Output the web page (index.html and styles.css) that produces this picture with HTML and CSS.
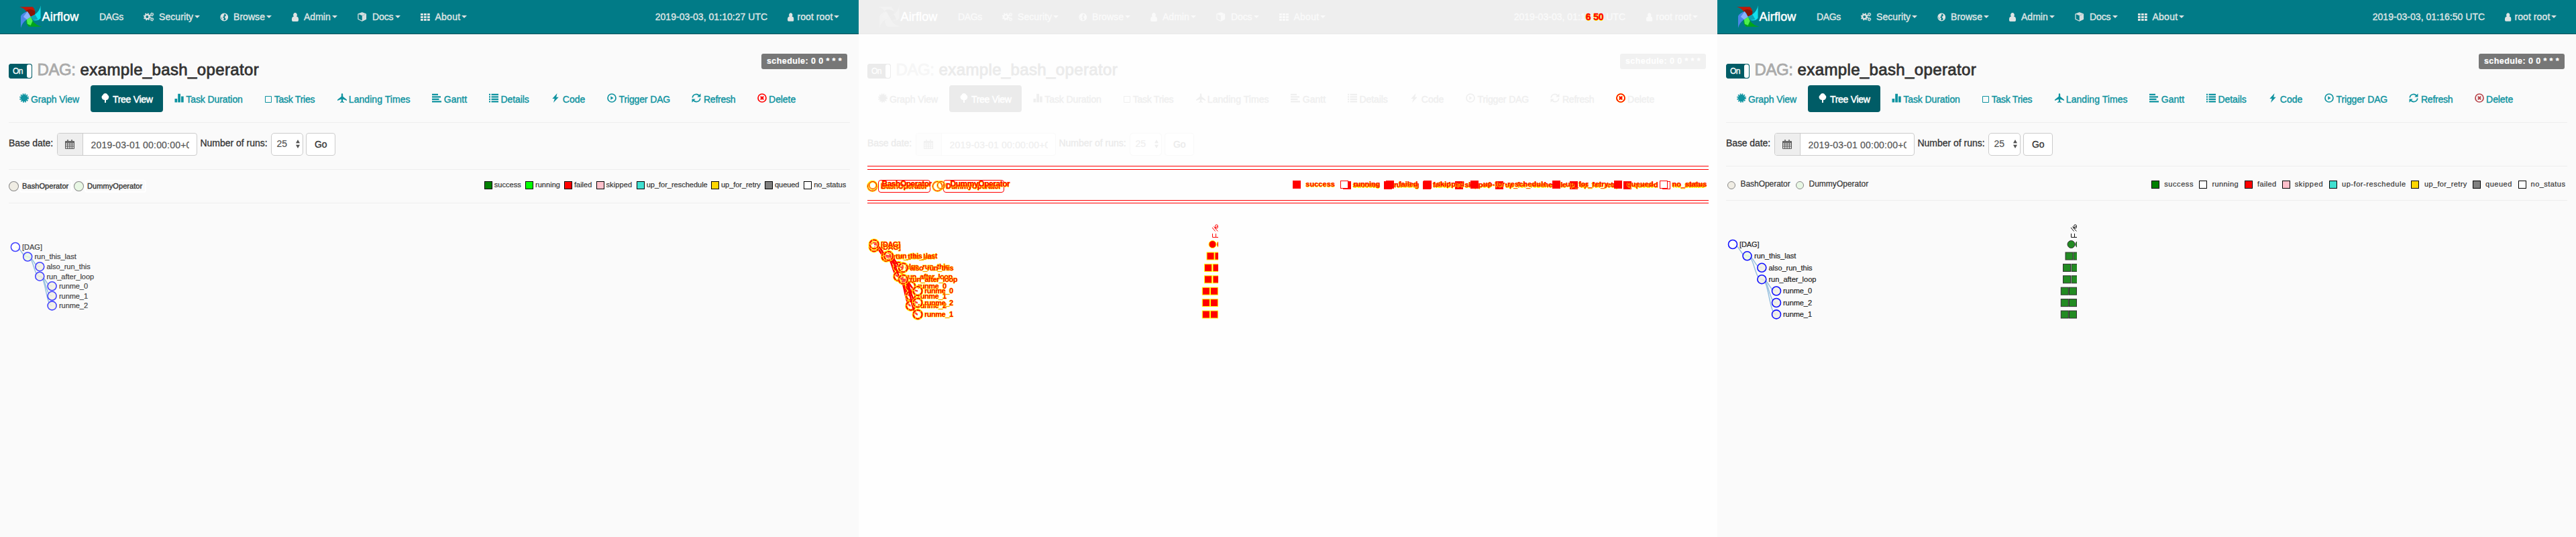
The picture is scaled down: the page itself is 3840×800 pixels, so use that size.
FILE: index.html
```html
<!DOCTYPE html>
<html lang="en">
<head>
<meta charset="utf-8">
<title>Airflow - example_bash_operator</title>
<link rel="stylesheet" href="styles.css">
</head>
<body>
<svg class="symbols" aria-hidden="true">
  <symbol id="cogs" viewBox="0 0 16 14"><g fill="none" stroke="currentColor"><circle cx="5.5" cy="7" r="3.3" stroke-width="2.4"/><circle cx="5.5" cy="7" r="5" stroke-width="1.6" stroke-dasharray="2 1.93"/><circle cx="13" cy="3.3" r="1.7" stroke-width="1.3"/><circle cx="13" cy="3.3" r="2.6" stroke-width="1" stroke-dasharray="1.2 1.52"/><circle cx="13" cy="10.8" r="1.7" stroke-width="1.3"/><circle cx="13" cy="10.8" r="2.6" stroke-width="1" stroke-dasharray="1.2 1.52"/></g></symbol>
  <symbol id="globe" viewBox="0 0 13 13"><circle cx="6.5" cy="6.5" r="5.5" fill="none" stroke="currentColor" stroke-width="1.3"/><path fill="currentColor" d="M1 5 3 2l3-1 1 2-1.500 1L6 5.500 4 6.500l2 1.500-.5 3L4 12 3 8.500zM8 1.500l3 2 1 3-1.500 3.500L9 11l-.5-3L7 7l1-2 1.500-.5z"/></symbol>
  <symbol id="user" viewBox="0 0 10 13"><path fill="currentColor" d="M5 0a2.800 3.200 0 0 1 2 5.500c2 .4 3 1.800 3 4V11q0 2-1.600 2H1.600Q0 13 0 11V9.500c0-2.200 1-3.600 3-4A2.800 3.200 0 0 1 5 0z"/></symbol>
  <symbol id="cube" viewBox="0 0 13 14"><path fill="none" stroke="currentColor" stroke-width="1.200" stroke-linejoin="round" d="M6.500.8 12.300 3v7.500L6.500 13.300.7 10.500V3z"/><path fill="currentColor" d="M6.500 5.500 12 3.300V10.500l-5.500 2.700zM6.500 1 1 3l5.500 2.200L12 3z" fill-opacity=".95"/></symbol>
  <symbol id="th" viewBox="0 0 14 11"><path fill="currentColor" d="M0 0h3.800v3H0zM5 0h3.800v3H5zM10 0h3.800v3H10zM0 4h3.800v3H0zM5 4h3.800v3H5zM10 4h3.800v3H10zM0 8h3.800v3H0zM5 8h3.800v3H5zM10 8h3.800v3H10z"/></symbol>
  <symbol id="burst" viewBox="0 0 14 14"><circle cx="7" cy="7" r="5.200" fill="currentColor"/><circle cx="7" cy="7" r="6" fill="none" stroke="currentColor" stroke-width="1.800" stroke-dasharray="1.700 1.442"/></symbol>
  <symbol id="tree" viewBox="0 0 12 14"><path fill="currentColor" d="M6 0c2 .2 3 1.200 3.500 2.500 2 1 2.300 3.500 1.300 5C10 9.500 8.500 10 7 10v4H5v-4C3 10 1.500 9 1 7.500 0 5.500.6 3.500 2.500 2.500 3 1 4 .2 6 0z"/></symbol>
  <symbol id="stats" viewBox="0 0 14 14"><path fill="currentColor" d="M.5 8h3.700v5.500H.5zM5.200.8H9v12.700H5.200zM10 4.500h3.700v9H10z"/></symbol>
  <symbol id="blank" viewBox="0 0 10 14"><path fill="none" stroke="currentColor" d="M.5 4.500h9v9h-9z"/></symbol>
  <symbol id="plane" viewBox="0 0 14 14"><path fill="currentColor" d="M7 0c.8 0 1.200 1 1.200 2v2.800L14 9.500V11L8.300 8.800 8 11.800l2 1.400v.8l-3-.6-3 .6v-.8l2-1.400-.3-3L0 11V9.500l5.800-4.700V2C5.800 1 6.200 0 7 0z"/></symbol>
  <symbol id="align" viewBox="0 0 14 14"><path fill="currentColor" d="M0 .8h9v2.200H0zM0 4.200h13v2.200H0zM0 7.800h10.500V10H0zM0 11.300h14v2.200H0z"/></symbol>
  <symbol id="list" viewBox="0 0 14 14"><path fill="currentColor" d="M0 .8h2v2.200H0zM0 4.200h2v2.200H0zM0 7.800h2V10H0zM0 11.300h2v2.200H0zM3.500.8H14v2.200H3.500zM3.500 4.200H14v2.200H3.500zM3.500 7.800H14V10H3.500zM3.500 11.300H14v2.200H3.500z"/></symbol>
  <symbol id="flash" viewBox="0 0 10 14"><path fill="currentColor" d="M7.500 0 .3 8h3.500L2 14l7.700-8.300H6.200z"/></symbol>
  <symbol id="play" viewBox="0 0 14 14"><circle cx="7" cy="7" r="6" fill="none" stroke="currentColor" stroke-width="1.700"/><path fill="currentColor" d="m5.300 4.300 4.200 2.700-4.200 2.700z"/></symbol>
  <symbol id="refresh" viewBox="0 0 14 14"><g fill="none" stroke="currentColor" stroke-width="1.700"><path d="M1.300 6.500A5.500 5.500 0 0 1 11 3.400M12.700 7.500A5.500 5.500 0 0 1 3 10.600"/></g><path fill="currentColor" d="M13.500.3v5.200H8.300zM.5 13.700V8.500h5.200z"/></symbol>
  <symbol id="remove" viewBox="0 0 14 14"><circle cx="7" cy="7" r="6" fill="none" stroke="currentColor" stroke-width="1.700"/><path fill="none" stroke="currentColor" stroke-width="2" d="m4.800 4.800 4.400 4.400M9.200 4.800 4.800 9.200"/></symbol>
  <symbol id="calendar" viewBox="0 0 14 14"><path fill="none" stroke="currentColor" d="M.5 2.500h13v11H.5zM.5 5h13M.5 8h13M.5 10.700h13M3.700 5v8.500M7 5v8.500M10.300 5v8.500"/><path fill="currentColor" d="M3 0h2v4H3zM9 0h2v4H9zM1 2.500h12V5H1z" fill-opacity=".75"/></symbol>
  <symbol id="sort" viewBox="0 0 6 13"><path fill="currentColor" d="M3 0l3 5.300H0zM3 13 0 7.700h6z"/></symbol>
</svg>
<main class="compare" id="compare"></main>
<script src="script.js"></script>
</body>
</html>
```
FILE: styles.css
```css
* { box-sizing: border-box; }
body { margin: 0; background: #fafafa; font: 14px/20px "Liberation Sans", Arial, sans-serif; color: #333; }
.symbols { position: absolute; width: 0; height: 0; }
.compare { display: grid; grid-template-columns: repeat(3, 1280px); height: 800px; overflow: hidden; }

.panel {
  --bg: #fafafa; --nav: #017b87; --nav-line: #00515a; --nav-text: #dfe3e3; --brand: #fff;
  --muted: #aaa; --text: #333; --deep: #005c66; --link: #0f93a0; --badge: #777;
  --line: #eee; --field: #ccc; --addon: #eee; --input: #555; --danger: #f00;
  height: 800px; overflow: hidden; background: var(--bg); color: var(--text);
}
.panel.after { --danger: #b8444a; }
.panel.diff {
  --bg: #fefefe; --nav: #eee; --nav-line: #e8e8e8; --nav-text: #fafafa; --brand: #fff;
  --muted: #f6f6f6; --text: #ebebeb; --deep: #ebebeb; --link: #efefef; --badge: #f1f1f1;
  --line: #fefefe; --field: #f9f9f9; --addon: #fdfdfd; --input: #efefef;
}
.fit { display: inline-block; white-space: pre; }
.icon { display: block; flex: none; }

.navbar {
  display: grid; grid-template-columns: 119px 66px 114px 107px 98px 94px 349.700px 197.800px 1fr;
  height: 51px; padding-left: 29px; align-items: center;
  background: var(--nav); border-bottom: 1px solid var(--nav-line); color: var(--nav-text);
}
.brand { display: flex; align-items: center; color: var(--brand); font-size: 18px; -webkit-text-stroke: .5px; }
.logo { display: block; width: 33.500px; height: 34px; }
.diff .logo path { fill: #f2f2f2; }
.diff .logo .shade { fill: #e8e8e8; }
.nav-item { display: flex; align-items: center; -webkit-text-stroke: .4px; }
.nav-icon { flex: none; }
.caret { margin-left: 2px; border: 4px solid transparent; border-top: 4px solid; border-bottom: 0; }

.dag-head { display: grid; grid-template-columns: 42.500px 64.100px 1fr 145px; height: 76px; padding: 0 0 0 13px; }
.toggle { display: flex; width: 35px; height: 22px; margin-top: 44px; border: 1px solid var(--deep); border-radius: 3px; background: var(--deep); color: #fff; font-size: 12px; padding-left: 5px; }
.toggle .fit { flex: 1; -webkit-text-stroke: .3px; }
.knob { width: 7px; background: #fff; border-radius: 3px; }
.title { margin-top: 38px; font-size: 24px; line-height: 30px; -webkit-text-stroke: .8px; }
.title.muted { color: var(--muted); }
.badge { width: 128px; height: 23px; margin-top: 29px; padding-left: 8px; border-radius: 3px; background: var(--badge); color: #fff; font: bold 12.500px/23px "Liberation Sans", Arial, sans-serif; -webkit-text-stroke: .2px; }

.tabs { display: grid; grid-template-columns: 122px 109.500px 134.500px 108.500px 140.500px 85px 94px 82px 126.500px 97.500px 100px; height: 55px; margin-left: 13px; color: var(--link); }
.tab { display: flex; height: 40px; padding: 12px 0 0 15.500px; border-radius: 4px; -webkit-text-stroke: .4px; }
.tab.active { width: 108px; background: var(--deep); color: #fff; -webkit-text-stroke: .5px; }
.tab .fit { line-height: 18px; }
.tab .icon.danger { color: var(--danger); }
.diff .tab .icon.danger { filter: drop-shadow(0 0 .5px #ff0) drop-shadow(0 0 .5px #ff0); }

.form { display: grid; grid-template-columns: 71.500px 209px 5px 105px 48px 4.600px 44px; height: 65px; margin: 0 13px; padding-top: 15px; border-top: 1px solid var(--line); align-items: start; }
.form label { line-height: 30px; -webkit-text-stroke: .3px; }
.form .runs-label { grid-column: 4; }
.date { display: flex; height: 34px; border: 1px solid var(--field); border-radius: 4px; background: #fff; overflow: hidden; color: var(--input); }
.addon { display: grid; place-items: center; width: 38px; border-right: 1px solid var(--field); background: var(--addon); }
.date-value { width: 146.500px; margin-left: 12px; overflow: hidden; line-height: 34px; white-space: pre; -webkit-text-stroke: .2px; }
.count { grid-column: 5; display: flex; align-items: center; justify-content: space-between; height: 34px; padding: 0 4px 2px 8px; border: 1px solid var(--field); border-radius: 5px; background: #fff; color: var(--input); -webkit-text-stroke: .2px; }
.go { grid-column: 7; height: 34px; padding-left: 12px; line-height: 33px; border: 1px solid var(--field); border-radius: 4px; background: #fff; -webkit-text-stroke: .3px; }

.legends { display: grid; height: 56px; margin: 0 13px; }
.legend { grid-area: 1 / 1; display: flex; justify-content: space-between; width: 1254px; border: solid var(--line); border-width: 1px 0; font-size: 11px; -webkit-text-stroke: .2px; }
.legend.before { height: 51px; margin-top: 5px; }
.legend.after { height: 52px; }
.ops, .states { display: flex; align-items: flex-start; }
.ops { font-size: 12px; }
.before .ops { font-size: 11px; padding-top: 15px; }
.after .ops { padding: 18px 0 0 1.500px; }
.before .states { padding-top: 17px; }
.after .states { padding-top: 21px; }
.op, .state { display: flex; flex: none; align-items: flex-start; }
.dot { border: 1px solid #888; border-radius: 50%; }
.before .dot { width: 14.600px; height: 15px; margin-top: 2px; }
.after .dot { width: 12px; height: 12px; margin-top: 4px; }
.before .chip { height: 19px; margin-left: 1px; padding: 0 4px 0 2.500px; border: 2px solid #fff; border-radius: 4px; line-height: 15px; -webkit-text-stroke: .35px; }
.after .chip { margin-left: 8px; line-height: 17px; }
.swatch { width: 12px; height: 12px; border: 1px solid #000; }
.state .fit { margin-top: -1px; line-height: 12px; }

.diff .legend { --line: #f00; }
.diff .legend .fit, .hot { color: #f00; font-weight: bold; text-shadow: .5px .5px #ff0, -.5px 0 #ff0; }
.diff .before .chip { border: 1px solid #f00; padding-left: 3.500px; line-height: 17px; }
.diff .dot { border-color: #f00; box-shadow: 0 0 0 1px #ff0, inset 0 0 0 1px #ff0; }
.diff .swatch { border-color: #f00; }

.graph { display: block; width: 1280px; height: 497px; font-size: 11px; }
.link { fill: none; stroke: #97c0df; stroke-width: 1.500; }
.node { stroke: #44f; stroke-width: 1.600; fill-opacity: .85; }
.after .node { stroke: #11f; }
.label { fill: #444; stroke: #444; stroke-width: .2; }
.after .label { fill: #222; stroke: #222; }
.run { fill: #228b22; stroke: #333; stroke-width: 1; }
.tick { fill: none; stroke: #111; stroke-width: 1; }
.diff .link { stroke: #f00; stroke-width: 2.500; }
.diff .node { stroke: #f00; stroke-width: 2; stroke-dasharray: 6 1; fill: #fefefe; fill-opacity: .25; }
.diff .halo { fill: none; stroke: #ff0; stroke-width: 4; }
.diff .label { fill: #f00; stroke: #ff0; stroke-width: 1; paint-order: stroke; font-weight: bold; }
.diff .run { fill: #f00; stroke: #ff0; }
.diff .tick { stroke: #f00; }
```
FILE: script.js
```js
const icon = (name, w, h, cls = '') => `<svg class="icon ${cls}" width="${w}" height="${h}"><use href="#${name}"/></svg>`;
const fit = (text, w, cls = '') => `<span class="fit ${cls}" data-w="${w}">${text}</span>`;

const NAV = [
  ['', 0, 0, 0, 'DAGs', 36, 0],
  ['cogs', 15.5, 14, 23, 'Security', 51.2, 1],
  ['globe', 12.5, 13, 20, 'Browse', 47, 1],
  ['user', 10, 13, 18, 'Admin', 39.8, 1],
  ['cube', 13.5, 14, 22, 'Docs', 31.5, 1],
  ['th', 14, 11, 21.4, 'About', 38, 1],
];
const TABS = [
  ['burst', 14, 'Graph View', 17.5, 72],
  ['tree', 12, 'Tree View', 17.5, 59.5],
  ['stats', 14, 'Task Duration', 17.3, 84.5],
  ['blank', 10, 'Task Tries', 14.2, 60.5],
  ['plane', 14, 'Landing Times', 16.8, 91.8],
  ['align', 14, 'Gantt', 18.3, 34.3],
  ['list', 14, 'Details', 18, 42.3],
  ['flash', 10, 'Code', 16.2, 33.8],
  ['play', 14, 'Trigger DAG', 18, 76.6],
  ['refresh', 14, 'Refresh', 18, 47.3],
  ['remove', 14, 'Delete', 17.6, 40],
];
const BASH = '#f0ede4', DUMMY = '#e8f7e4';
const COLORS = ['green', 'lime', 'red', 'pink', 'turquoise', 'gold', 'gray', 'white'];

// Each state: name, swatch x, label x, label width
const LEGENDS = {
  before: {
    ops: [['BashOperator', BASH, 69.2, 97], ['DummyOperator', DUMMY, 82.2, 110]],
    states: [['success', 722, 736.8, 40], ['running', 783, 798, 37], ['failed', 841, 856, 26.3], ['skipped', 889, 903.5, 38.6],
      ['up_for_reschedule', 949, 963.7, 91], ['up_for_retry', 1060, 1075, 58.7], ['queued', 1140, 1155, 36.4], ['no_status', 1198, 1213.2, 48]],
    colors: COLORS,
  },
  after: {
    ops: [['BashOperator', BASH, 74.2, 102], ['DummyOperator', DUMMY, 88.8, 120]],
    states: [['success', 647, 666.3, 43.7], ['running', 718, 737.4, 39.6], ['failed', 786, 805, 28.4], ['skipped', 842, 860.7, 42.5],
      ['up-for-reschedule', 912, 931, 95.6], ['up_for_retry', 1034, 1054, 63.5], ['queued', 1126, 1145, 39.8], ['no_status', 1194, 1212.6, 51.8]],
    colors: COLORS.map((c) => (c === 'lime' ? 'white' : c)),
  },
};
// Each node: label, x, y, label x, label width, parent index, fill
const TREES = {
  before: [['[DAG]', 22.9, 368, 33, 30, -1, '#fff'], ['run_this_last', 41.2, 382.5, 51.4, 62.3, 0, DUMMY],
    ['also_run_this', 59.3, 397.2, 69.4, 65.4, 1, BASH], ['run_after_loop', 59.3, 411.7, 69.4, 70.8, 1, BASH],
    ['runme_0', 77.6, 426.3, 88, 43, 3, BASH], ['runme_1', 77.6, 440.8, 88, 43, 3, BASH], ['runme_2', 77.6, 455.4, 88, 43, 3, BASH]],
  after: [['[DAG]', 23, 364, 33, 29.5, -1, '#fff'], ['run_this_last', 44.5, 381.3, 55, 62.3, 0, DUMMY],
    ['also_run_this', 66.3, 398.8, 76.4, 65.2, 1, BASH], ['run_after_loop', 66.3, 416.2, 76.4, 71, 1, BASH],
    ['runme_0', 88, 433.5, 98, 43, 3, BASH], ['runme_2', 88, 451, 98, 43, 3, BASH], ['runme_1', 88, 468.4, 98, 43, 3, BASH]],
};
const RUNS = [[519, 531], [515.5, 528], [515.5, 528], [512.3, 524.5], [512.3, 524.5], [512.3, 524.5]];

function legend(kind, diff) {
  const { ops, states, colors } = LEGENDS[kind];
  const opHtml = ops.map(([t, c, w, total]) =>
    `<div class="op" style="width:${total}px"><span class="dot" style="background:${diff ? 'transparent' : c}"></span><span class="chip">${fit(t, w)}</span></div>`).join('');
  const stateHtml = states.map(([t, x, lx, w], i) => {
    const end = i < states.length - 1 ? states[i + 1][1] : 1267;
    const fill = diff ? (colors[i] === 'white' ? '#fff' : '#f00') : colors[i];
    return `<div class="state" style="width:${end - x}px"><span class="swatch" style="background:${fill};margin-right:${(lx - x - 12).toFixed(1)}px"></span>${fit(t, w)}</div>`;
  }).join('');
  return `<div class="legend ${kind}"><div class="ops">${opHtml}</div><div class="states">${stateHtml}</div></div>`;
}

function tree(kind, diff) {
  const nodes = TREES[kind];
  const links = nodes.filter((n) => n[5] >= 0).map(([, x, y, , , p]) => {
    const [, px, py] = nodes[p];
    const m = (x + px) / 2;
    return `<path class="link" d="M${px} ${py}C${m} ${py} ${m} ${y} ${x} ${y}"/>`;
  }).join('');
  const dots = nodes.map(([t, x, y, lx, w, , fill]) =>
    `${diff ? `<circle class="halo" cx="${x}" cy="${y}" r="6.500"/>` : ''}<circle class="node" cx="${x}" cy="${y}" r="6.500" fill="${fill}"/><text class="label" x="${lx}" y="${y + 3.8}" textLength="${w}">${t}</text>`).join('');
  return links + dots;
}

function runs(id) {
  const rects = RUNS.map((row, i) => row.map((x) =>
    `<rect class="run" x="${x}" y="${376 + i * 17.4}" width="11" height="11"/>`).join('')).join('');
  return `<clipPath id="${id}"><path d="M500 303h36v190h-36z"/></clipPath><g clip-path="url(#${id})">
    <circle class="run" cx="527.5" cy="364" r="5.500"/><circle class="run" cx="539.500" cy="364" r="5.500"/>${rects}
    <path class="tick" d="M527.500 348v5.500h10M532.500 348v5.500M527 339l4.500 5.500M529.500 337.500l3 4 3 3M531 340l4-3"/>
    <ellipse class="tick" cx="533.500" cy="337.500" rx="2" ry="2.800"/></g>`;
}

const LOGO = `<svg class="logo" viewBox="0 0 34 34">
  <path fill="#c21807" d="M0 2 20 2Q25 7 23 14L16 17 15 12 10 9Q8 4 0 2z"/><path class="shade" fill="#5f1408" d="M10 8Q16 3 24 9l-1 5-7 3-1-5z" fill-opacity=".55"/>
  <path fill="#11e1ee" d="M32 0V19Q28 24 21 22L17 17 23 14Q31 8 32 0z"/><path class="shade" fill="#087f92" d="M17 17l7-3 4 7-7 1z" fill-opacity=".6"/>
  <path fill="#00a51b" d="M34 32H14Q9 27 11 21L17 17 20 23Q25 30 34 32z"/><path fill="#4df04d" d="M11 21l6-4 3 6-3 7-5-2z"/>
  <path fill="#4b86e8" d="M2 34V16Q5 11 12 9L17 17 11 21Q4 26 2 34z"/><path fill="#99bdff" d="M6 17 12 9l5 8-6 4z" fill-opacity=".8"/></svg>`;

function panel(kind) {
  const diff = kind === 'diff';
  const time = diff
    ? `${fit('2019-03-03, 01:1', 107)}${fit('6', 7.500, 'hot')}${fit(':', 4)}${fit('50', 15, 'hot')}${fit(' UTC', 33)}`
    : fit(`2019-03-03, 01:${kind === 'before' ? '10:27' : '16:50'} UTC`, 167.5);
  const nav = NAV.map(([n, w, h, gap, t, tw, caret]) =>
    `<div class="nav-item"><span class="nav-icon" style="width:${gap}px">${n ? icon(n, w, h) : ''}</span>${fit(t, tw)}${caret ? '<i class="caret"></i>' : ''}</div>`).join('');
  const tabs = TABS.map(([n, w, t, gap, tw], i) =>
    `<div class="tab${i === 1 ? ' active' : ''}">${icon(n, w, 14, n === 'remove' ? 'danger' : '').replace('<svg', `<svg style="margin-right:${(gap - w).toFixed(1)}px"`)}${fit(t, tw)}</div>`).join('');
  const kinds = diff ? ['before', 'after'] : [kind];
  return `<section class="panel ${diff ? 'diff' : `plain ${kind}`}">
    <nav class="navbar"><div class="brand">${LOGO}${fit('Airflow', 55)}</div>${nav}
      <div class="nav-item">${time}</div>
      <div class="nav-item"><span class="nav-icon" style="width:13.900px">${icon('user', 9.5, 13)}</span>${fit('root root', 53)}<i class="caret"></i></div></nav>
    <header class="dag-head"><div class="toggle">${fit('On', 15)}<i class="knob"></i></div>
      <div class="title muted">${fit('DAG:', 57)}</div><div class="title">${fit('example_bash_operator', 266.5)}</div>
      <div class="badge">${fit('schedule: 0 0 * * *', 112)}</div></header>
    <div class="tabs">${tabs}</div>
    <div class="form"><label>${fit('Base date:', 66)}</label>
      <div class="date"><span class="addon">${icon('calendar', 14, 14)}</span><span class="date-value">${fit('2019-03-01 00:00:00+00:00', 178)}</span></div>
      <label class="runs-label">${fit('Number of runs:', 100)}</label>
      <div class="count">${fit('25', 15.5)}${icon('sort', 6, 13)}</div><div class="go">${fit('Go', 18)}</div></div>
    <div class="legends">${kinds.map((k) => legend(k, diff)).join('')}</div>
    <svg class="graph" viewBox="0 303 1280 497">${kinds.map((k) => tree(k, diff)).join('')}${kind !== 'before' ? runs(`clip-${kind}`) : ''}</svg>
  </section>`;
}

document.getElementById('compare').innerHTML = ['before', 'diff', 'after'].map(panel).join('');

document.querySelectorAll('.fit').forEach((el) => {
  const box = document.createRange();
  box.selectNodeContents(el);
  const natural = box.getBoundingClientRect().width;
  el.style.letterSpacing = `${((el.dataset.w - natural) / el.textContent.length).toFixed(3)}px`;
});
```
